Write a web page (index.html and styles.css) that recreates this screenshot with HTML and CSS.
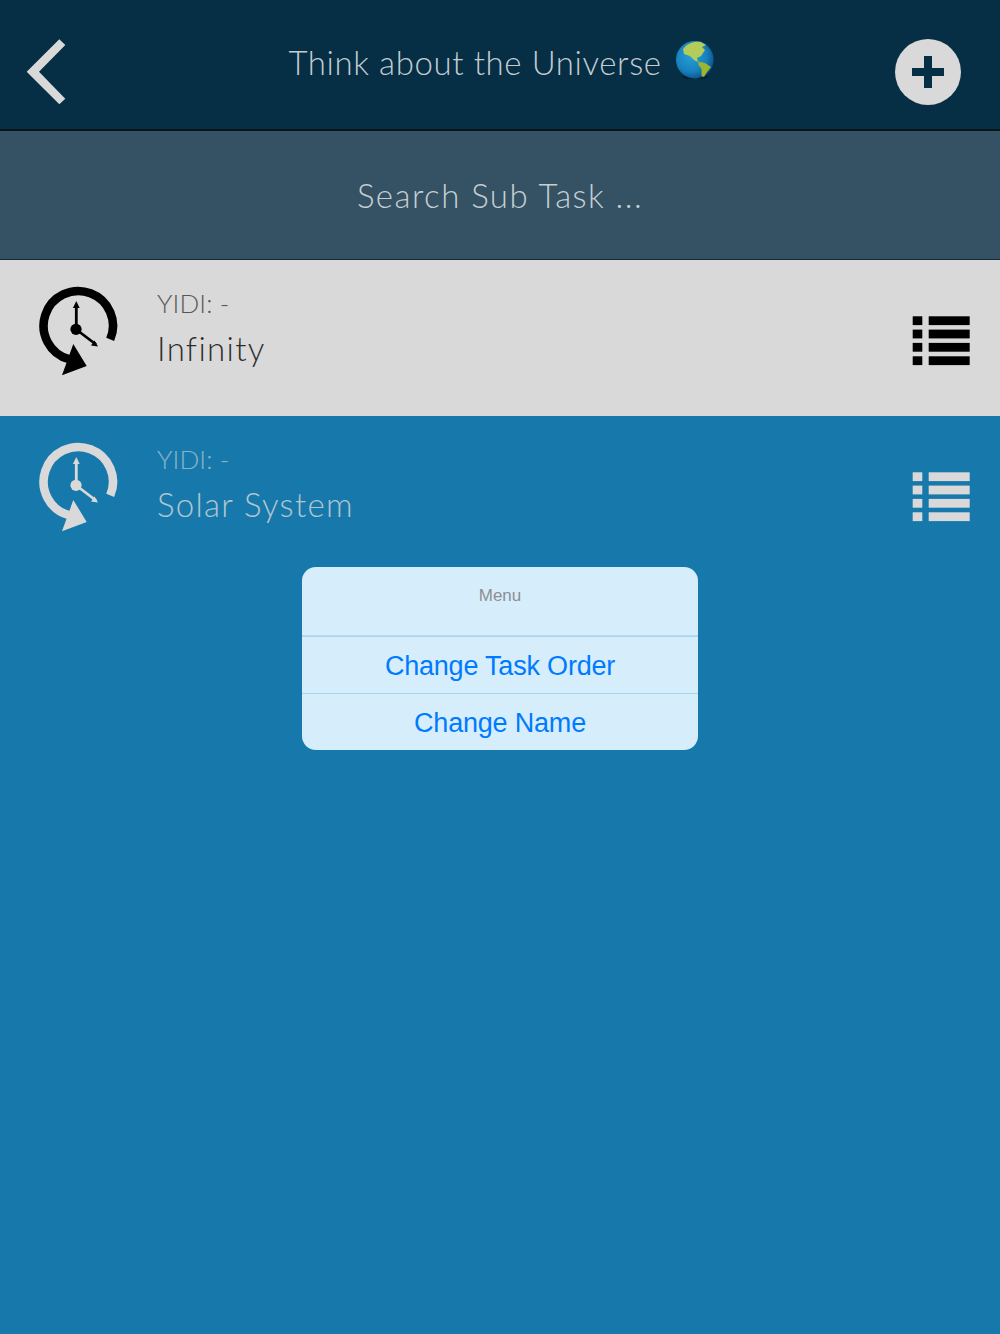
FILE: index.html
```html
<!DOCTYPE html>
<html lang="en">
<head>
    <meta charset="UTF-8">
    <meta name="viewport" content="width=device-width, initial-scale=1.0">
    <title>Think about the Universe</title>
    <link rel="stylesheet" href="styles.css">
</head>
<body>
    <svg class="defs" width="0" height="0">
        <defs>
            <radialGradient id="sea" cx="40%" cy="40%" r="65%">
                <stop offset="0%" stop-color="#25a0d8"/>
                <stop offset="65%" stop-color="#1780bd"/>
                <stop offset="100%" stop-color="#0b4f86"/>
            </radialGradient>
            <symbol id="clock" viewBox="0 0 84 100">
                <path d="M74.2 59.4A34.7 34.7 0 1 0 33 79.2" fill="none" stroke="currentColor" stroke-width="8.6"/>
                <polygon points="37.3,64 50.7,86 26,95.3" fill="currentColor"/>
                <circle cx="40" cy="49.3" r="5.6" fill="currentColor"/>
                <rect x="38.9" y="26" width="2.8" height="24" fill="currentColor"/>
                <polygon points="40.3,21 43.7,28 36.9,28" fill="currentColor"/>
                <path d="M41 50L60 64.5" stroke="currentColor" stroke-width="2.8"/>
                <polygon points="62,66.5 55,65.5 58.5,60.5" fill="currentColor"/>
            </symbol>
            <symbol id="list" viewBox="0 0 58 50">
                <rect x="0.7" y="0.3" width="9.6" height="8.8" fill="currentColor"/>
                <rect x="16.7" y="0.3" width="41" height="8.8" fill="currentColor"/>
                <rect x="0.7" y="13.6" width="9.6" height="8.8" fill="currentColor"/>
                <rect x="16.7" y="13.6" width="41" height="8.8" fill="currentColor"/>
                <rect x="0.7" y="26.9" width="9.6" height="8.8" fill="currentColor"/>
                <rect x="16.7" y="26.9" width="41" height="8.8" fill="currentColor"/>
                <rect x="0.7" y="40.3" width="9.6" height="8.8" fill="currentColor"/>
                <rect x="16.7" y="40.3" width="41" height="8.8" fill="currentColor"/>
            </symbol>
        </defs>
    </svg>

    <header class="topbar">
        <svg class="back" viewBox="0 0 40 66" width="40" height="66">
            <polygon points="0.7,32.7 33.3,0.3 39.3,6 13,32.7 39.3,59.7 33.3,65.3" fill="#d9d9d9"/>
        </svg>
        <h1 class="title">
            <span>Think about the Universe</span>
            <svg class="globe" viewBox="13 9 40 40" width="40" height="40">
                <ellipse cx="34" cy="47" rx="13" ry="2.4" fill="#000" opacity="0.25"/>
                <circle cx="33.8" cy="29.7" r="18.8" fill="url(#sea)"/>
                <path d="M22 19C27 12 36 11 40 12L45 15L41 17L44 20L40 26L36 28L37 32L33 30L29 26L23 24Z" fill="#b4cc5a"/>
                <path d="M37 31.5L44 33L50 37L46 42L43 47L40.5 46L40.5 39L37.5 35Z" fill="#9db52f"/>
            </svg>
        </h1>
        <button class="add">
            <svg viewBox="0 0 66 66" width="66" height="66">
                <circle cx="33" cy="33" r="33" fill="#d9d9d9"/>
                <path d="M29 17h8v12h12v8H37v12h-8V37H17v-8h12z" fill="#062e45"/>
            </svg>
        </button>
    </header>

    <div class="search">Search Sub Task ...</div>

    <ul class="tasks">
        <li class="task task-light">
            <svg class="clock" width="84" height="100"><use href="#clock"/></svg>
            <div class="task-text">
                <div class="yidi">YIDI: -</div>
                <div class="name">Infinity</div>
            </div>
            <svg class="list" width="58" height="50"><use href="#list"/></svg>
        </li>
        <li class="task task-blue">
            <svg class="clock" width="84" height="100"><use href="#clock"/></svg>
            <div class="task-text">
                <div class="yidi">YIDI: -</div>
                <div class="name">Solar System</div>
            </div>
            <svg class="list" width="58" height="50"><use href="#list"/></svg>
        </li>
    </ul>

    <div class="alert">
        <div class="alert-title">Menu</div>
        <div class="alert-btn">Change Task Order</div>
        <div class="alert-btn">Change Name</div>
    </div>
</body>
</html>
```

FILE: styles.css
```css
* {
    box-sizing: border-box;
}
body {
    font-family: 'Lato', sans-serif;
    background: #1779ab;
    margin: 0;
    min-height: 1334px;
    position: relative;
}
.defs {
    display: block;
    height: 0;
}
.topbar {
    height: 131px;
    background: #062e45;
    border-bottom: 2px solid #0b1418;
    padding: 15px 39px 0;
    display: grid;
    grid-template-columns: 1fr auto 1fr;
    align-items: center;
}
.back {
    display: block;
    margin-left: -13px;
}
.title {
    margin: 0 0 20px 0;
    display: flex;
    align-items: center;
    font-size: 33px;
    font-weight: 300;
    letter-spacing: 0.6px;
    color: #c3ccd1;
}
.globe {
    margin: -6px -2px 0 12px;
}
.add {
    justify-self: end;
    padding: 0;
    border: none;
    background: transparent;
    height: 66px;
}
.search {
    height: 129px;
    background: #345264;
    border-bottom: 1px solid #1a2a33;
    display: flex;
    align-items: center;
    justify-content: center;
    font-size: 33px;
    font-weight: 300;
    letter-spacing: 1.45px;
    color: #c5ced3;
}
.tasks {
    list-style: none;
    margin: 0;
    padding: 0;
}
.task {
    height: 156px;
    padding: 20px 30px 0 36px;
    display: flex;
    align-items: flex-start;
}
.task-light {
    background: #d9d9d9;
    color: #000;
}
.task-blue {
    background: #1779ab;
    color: #d9d9d9;
}
.clock {
    flex: none;
}
.task-text {
    flex: 1;
    margin-left: 37px;
}
.yidi {
    margin-top: 7px;
    font-size: 26px;
    line-height: 32px;
    font-weight: 300;
    letter-spacing: 0.1px;
    opacity: 0.6;
}
.name {
    margin-top: 7px;
    font-size: 33px;
    line-height: 44px;
    font-weight: 300;
    letter-spacing: 1.3px;
    opacity: 0.8;
}
.list {
    flex: none;
    margin-top: 36px;
}
.alert {
    position: absolute;
    left: 302px;
    top: 567px;
    width: 396px;
    height: 183px;
    background: #d6eefb;
    border-radius: 14px;
    font-family: 'Liberation Sans', sans-serif;
    text-align: center;
}
.alert-title {
    height: 69px;
    padding-top: 19px;
    border-bottom: 1px solid #b5dcf5;
    font-size: 17px;
    line-height: 20px;
    color: #8e8e93;
}
.alert-btn {
    height: 57px;
    border-top: 1px solid #a5d5f3;
    font-size: 27px;
    line-height: 59px;
    letter-spacing: -0.2px;
    color: #007aff;
}
```
